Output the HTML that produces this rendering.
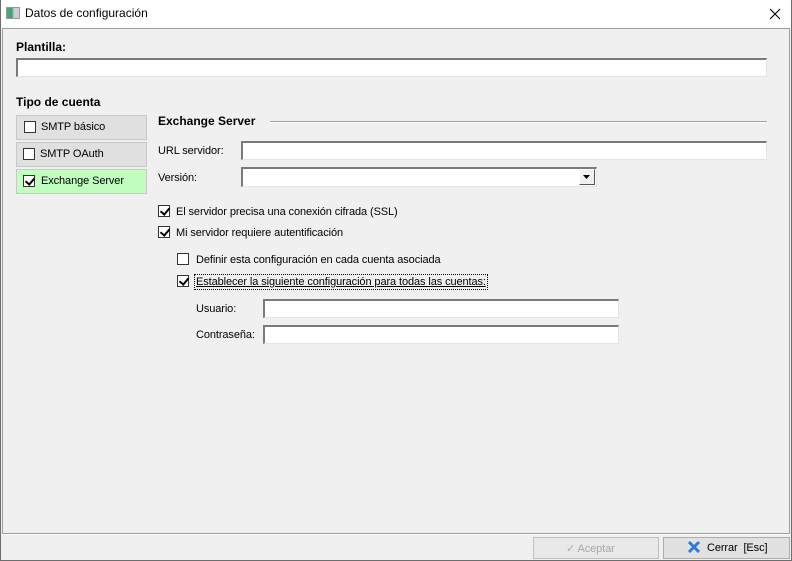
<!DOCTYPE html>
<html><head><meta charset="utf-8"><style>
*{margin:0;padding:0;box-sizing:border-box}
body{width:792px;height:561px;background:#f0f0f0;font-family:"Liberation Sans",Arial,sans-serif;font-size:11px;letter-spacing:-0.1px;color:#000;position:relative;overflow:hidden}
.a{position:absolute;white-space:nowrap}
.in{position:absolute;background:#fff;border:1px solid #c8c8c8;border-top:2px solid #7a7a7a;border-left:2px solid #7a7a7a;border-right-color:#e4e4e4;border-bottom-color:#e4e4e4}
.cb{position:absolute;width:12px;height:12px;border:1px solid #333;background:#fff}
.cb.k::after{content:"";position:absolute;left:3px;top:0px;width:4px;height:7px;border-right:2px solid #000;border-bottom:2px solid #000;transform:rotate(40deg)}
.b{font-weight:bold;font-size:12px;letter-spacing:0}
.tab{position:absolute;left:16px;width:131px;height:25px;border:1px solid #c8c8c8;background:#e0e0e0}
</style></head><body>
<div class="a" style="left:0;top:0;width:792px;height:28px;background:#fff"></div>
<div class="a" style="left:6px;top:7px;width:14px;height:12px;background:linear-gradient(90deg,#4a8,#3a6 40%,#ccd 60%,#ccd);border:1px solid #999"></div>
<div class="a" style="left:25px;top:6px;font-size:12px;letter-spacing:0">Datos de configuración</div>
<svg class="a" style="left:769px;top:8px" width="12" height="12"><path d="M1 1L11 11M11 1L1 11" stroke="#000" stroke-width="1.1"/></svg>
<div class="a" style="left:0;top:0;width:792px;height:561px;border:1px solid #6d6d6d;border-top:none"></div>
<div class="a" style="left:2px;top:28px;width:788px;height:506px;border:1px solid #a0a0a0;box-shadow:0 1px 0 #fff"></div>

<div class="a b" style="left:16px;top:40px">Plantilla:</div>
<div class="in" style="left:16px;top:58px;width:751px;height:19px"></div>
<div class="a b" style="left:16px;top:95px">Tipo de cuenta</div>

<div class="tab" style="top:115px"></div><div class="cb" style="left:24px;top:121px"></div><div class="a" style="left:41px;top:121px">SMTP básico</div>
<div class="tab" style="top:142px"></div><div class="cb" style="left:23px;top:148px"></div><div class="a" style="left:40px;top:148px">SMTP OAuth</div>
<div class="tab" style="top:169px;background:#c0ffc0"></div><div class="cb k" style="left:23px;top:175px"></div><div class="a" style="left:41px;top:175px">Exchange Server</div>

<div class="a b" style="left:158px;top:114px">Exchange Server</div>
<div class="a" style="left:270px;top:121px;width:497px;height:1px;background:#a0a0a0;border-bottom:1px solid #fff;box-sizing:content-box"></div>
<div class="a" style="left:158px;top:145px">URL servidor:</div>
<div class="in" style="left:241px;top:141px;width:526px;height:19px"></div>
<div class="a" style="left:158px;top:172px">Versión:</div>
<div class="in" style="left:241px;top:167px;width:356px;height:20px"></div>
<div class="a" style="left:579px;top:169px;width:16px;height:16px;background:#f0f0f0;border:1px solid;border-color:#fff #555 #555 #fff"></div>
<svg class="a" style="left:583px;top:175px" width="8" height="5"><path d="M0 0H7L3.5 4Z" fill="#000"/></svg>

<div class="cb k" style="left:158px;top:205px"></div><div class="a" style="left:176px;top:206px">El servidor precisa una conexión cifrada (SSL)</div>
<div class="cb k" style="left:158px;top:226px"></div><div class="a" style="left:176px;top:227px">Mi servidor requiere autentificación</div>
<div class="cb" style="left:177px;top:253px"></div><div class="a" style="left:196px;top:254px">Definir esta configuración en cada cuenta asociada</div>
<div class="cb k" style="left:177px;top:275px"></div><div class="a" style="left:196px;top:276px;text-decoration:underline;outline:1px dotted #000;outline-offset:1px">Establecer la siguiente configuración para todas las cuentas:</div>
<div class="a" style="left:196px;top:303px">Usuario:</div>
<div class="in" style="left:263px;top:299px;width:356px;height:19px"></div>
<div class="a" style="left:196px;top:329px">Contraseña:</div>
<div class="in" style="left:263px;top:325px;width:356px;height:19px"></div>

<div class="a" style="left:533px;top:537px;width:126px;height:22px;border:1px solid #c0c0c0;background:#e8e8e8"></div>
<div class="a" style="left:566px;top:542px;color:#a8a8a8">✓ Aceptar</div>
<div class="a" style="left:663px;top:537px;width:127px;height:22px;border:1px solid #adadad;background:#e1e1e1"></div>
<svg class="a" style="left:687px;top:540px" width="14" height="14"><path d="M2 2L12 12M12 2L2 12" stroke="#2a7ad8" stroke-width="3"/></svg>
<div class="a" style="left:707px;top:542px">Cerrar&nbsp; [Esc]</div>
</body></html>
